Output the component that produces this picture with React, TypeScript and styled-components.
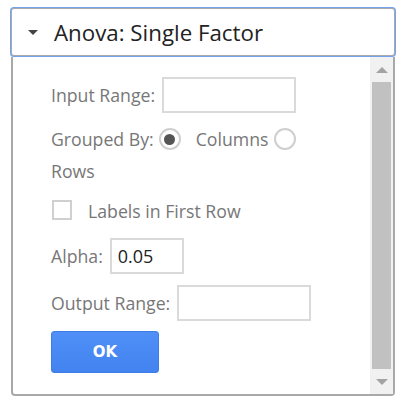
import React, { useState } from "react";
import styled, { createGlobalStyle } from "styled-components";

const GlobalStyle = createGlobalStyle`
  html, body {
    margin: 0;
    padding: 0;
    background: #fff;
  }
  body {
    font-family: "Open Sans", "Liberation Sans", sans-serif;
  }
`;

const Panel = styled.div`
  width: 386px;
  margin: 7px 0 0 10px;
  display: flex;
  flex-direction: column;
`;

const Header = styled.div`
  height: 46px;
  border: 1px solid #a9a9a9;
  box-shadow: 0 0 0 1px #74a3ee;
  border-radius: 3px;
  margin: 1px;
  display: flex;
  align-items: center;
  gap: 16px;
  padding-left: 16px;
  box-sizing: content-box;
  background: #fff;
`;

const Caret = styled.span`
  width: 0;
  height: 0;
  border-left: 5px solid transparent;
  border-right: 5px solid transparent;
  border-top: 5px solid #444;
  margin-top: 1px;
`;

const Title = styled.h1`
  margin: 0;
  font-size: 22.3px;
  font-weight: 400;
  color: #222;
`;

const Body = styled.div`
  margin: 0 1px;
  height: 337px;
  border: 2px solid #a9a9a9;
  border-top: none;
  border-radius: 0 0 4px 4px;
  display: flex;
`;

const Content = styled.div`
  flex: 1;
  padding: 20px 0 0 38px;
  display: flex;
  flex-direction: column;
  color: #777;
  font-size: 17.7px;
`;

const Row = styled.div<{ $top?: number }>`
  display: flex;
  align-items: center;
  gap: 7px;
  margin-top: ${(p) => p.$top ?? 0}px;
`;

const TextBox = styled.input<{ $w: number }>`
  width: ${(p) => p.$w}px;
  height: 36px;
  box-sizing: border-box;
  border: 2px solid #dadada;
  padding: 0 6px;
  font-family: inherit;
  font-size: 18px;
  color: #222;
  outline: none;
`;

const Group = styled.div`
  width: 270px;
  display: flex;
  flex-wrap: wrap;
  align-items: center;
  row-gap: 10px;
  margin-top: 15px;
  line-height: 22px;
`;

const Radio = styled.span<{ $on?: boolean }>`
  width: 22px;
  height: 22px;
  box-sizing: border-box;
  border: 2px solid #cfcfcf;
  border-radius: 50%;
  display: inline-flex;
  align-items: center;
  justify-content: center;
  margin: 0 ${(p) => (p.$on ? 15 : 0)}px 0 ${(p) => (p.$on ? 5 : 6)}px;
  &::after {
    content: "";
    width: 11px;
    height: 11px;
    border-radius: 50%;
    background: ${(p) => (p.$on ? "#555" : "transparent")};
  }
`;

const CheckRow = styled.label`
  display: flex;
  align-items: center;
  gap: 16px;
  margin-top: 17px;
  padding-left: 1px;
  line-height: 24px;
`;

const Box = styled.span`
  width: 20px;
  height: 20px;
  box-sizing: border-box;
  border: 2px solid #d0d0d0;
  margin-top: -2px;
`;

const OkButton = styled.button`
  width: 108px;
  height: 42px;
  margin-top: 10px;
  border: 1px solid #3d7de6;
  border-radius: 3px;
  background: linear-gradient(#4f8ff7, #4283f0);
  color: #fff;
  font-family: "DejaVu Sans", Verdana, sans-serif;
  font-weight: 700;
  font-size: 15px;
`;

const Scrollbar = styled.div`
  width: 23px;
  background: #f1f1f1;
  display: flex;
  flex-direction: column;
  align-items: center;
`;

const Arrow = styled.span<{ $down?: boolean }>`
  height: 25px;
  display: flex;
  align-items: center;
  justify-content: center;
  &::after {
    content: "";
    border-left: 6px solid transparent;
    border-right: 6px solid transparent;
    ${(p) =>
      p.$down ? "border-top: 6px solid #a3a3a3;" : "border-bottom: 6px solid #a3a3a3;"}
  }
`;

const Thumb = styled.div`
  flex: 1;
  width: 19px;
  background: #c1c1c1;
`;

export default function App() {
  const [alpha, setAlpha] = useState("0.05");
  return (
    <>
      <GlobalStyle />
      <Panel>
        <Header>
          <Caret />
          <Title>Anova: Single Factor</Title>
        </Header>
        <Body>
          <Content>
            <Row>
              <span>Input Range:</span>
              <TextBox $w={134} />
            </Row>
            <Group>
              <span>Grouped By:</span>
              <Radio $on />
              <span>Columns</span>
              <Radio />
              <span>Rows</span>
            </Group>
            <CheckRow>
              <Box />
              <span>Labels in First Row</span>
            </CheckRow>
            <Row $top={15}>
              <span>Alpha:</span>
              <TextBox $w={74} value={alpha} onChange={(e) => setAlpha(e.target.value)} />
            </Row>
            <Row $top={11}>
              <span>Output Range:</span>
              <TextBox $w={134} />
            </Row>
            <div>
              <OkButton>OK</OkButton>
            </div>
          </Content>
          <Scrollbar>
            <Arrow />
            <Thumb />
            <Arrow $down />
          </Scrollbar>
        </Body>
      </Panel>
    </>
  );
}
